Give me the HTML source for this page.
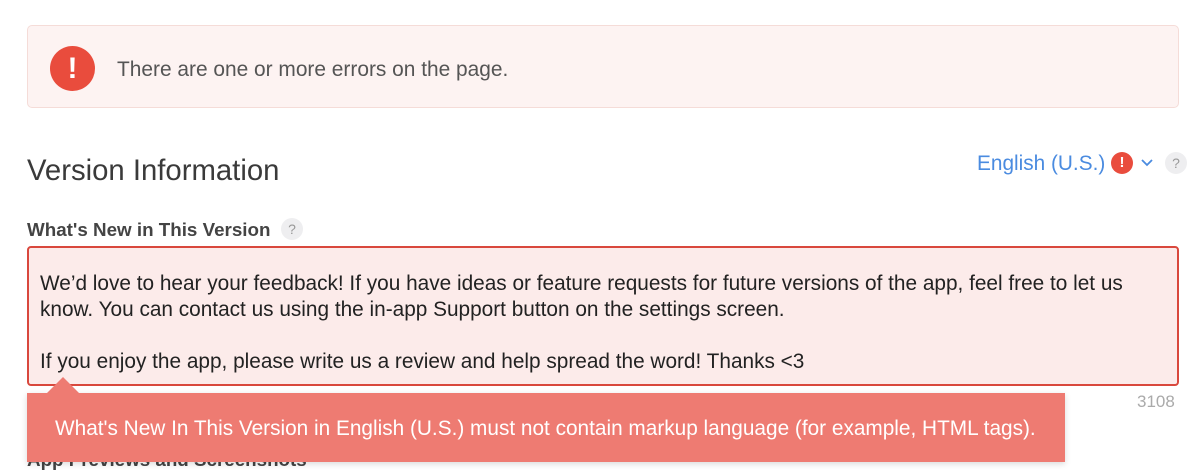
<!DOCTYPE html>
<html><head><style>
body{margin:0;width:1200px;height:474px;overflow:hidden;background:#fff;font-family:"Liberation Sans",sans-serif;position:relative}
.ab{position:absolute}
</style></head><body>
<div class="ab" style="left:27px;top:25px;width:1150px;height:81px;background:#fdf3f2;border:1px solid #f5dcd8;border-radius:5px"></div>
<div class="ab" style="left:50px;top:46px;width:45px;height:45px;border-radius:50%;background:#e94c3d;color:#fff;font:bold 30px/45px 'Liberation Sans';text-align:center">!</div>
<div class="ab" style="left:117px;top:58px;font-size:20.9px;color:#555">There are one or more errors on the page.</div>
<div class="ab" style="left:27px;top:154px;font-size:29.3px;color:#3a3a3a">Version Information</div>
<div class="ab" style="left:977px;top:152px;font-size:20.8px;color:#4a8be0">English (U.S.)</div>
<div class="ab" style="left:1111px;top:152px;width:22px;height:22px;border-radius:50%;background:#e94c3d;color:#fff;font:bold 15px/22px 'Liberation Sans';text-align:center">!</div>
<svg class="ab" style="left:1140px;top:158px" width="14" height="10"><path d="M2 2l5 5 5-5" stroke="#4a8be0" stroke-width="1.8" fill="none"/></svg>
<div class="ab" style="left:1165px;top:152px;width:22px;height:22px;border-radius:50%;background:#eeeef0;color:#999;font-size:14px;line-height:22px;text-align:center">?</div>
<div class="ab" style="left:27px;top:219px;font-size:18.8px;font-weight:bold;color:#444">What's New in This Version</div>
<div class="ab" style="left:281px;top:218px;width:22px;height:22px;border-radius:50%;background:#eeeef0;color:#999;font-size:14px;line-height:22px;text-align:center">?</div>
<div class="ab" style="left:27px;top:246px;width:1148px;height:136px;background:#fcebea;border:2px solid #d9483d;border-radius:4px"></div>
<div class="ab" style="left:40px;top:271px;width:1120px;font-size:20.8px;line-height:26px;color:#222">We’d love to hear your feedback! If you have ideas or feature requests for future versions of the app, feel free to let us know. You can contact us using the in-app Support button on the settings screen.<br><br>If you enjoy the app, please write us a review and help spread the word! Thanks &lt;3</div>
<div class="ab" style="left:1137px;top:392px;font-size:17px;color:#aaa">3108</div>
<div class="ab" style="left:27px;top:449px;font-size:18.8px;font-weight:bold;color:#444">App Previews and Screenshots</div>
<div class="ab" style="left:27px;top:393px;width:1038px;height:69px;background:#ee7b72;box-shadow:0 2px 6px rgba(0,0,0,.15)"></div>
<div class="ab" style="left:47px;top:377px;width:0;height:0;border-left:16px solid transparent;border-right:16px solid transparent;border-bottom:16px solid #ee7b72"></div>
<div class="ab" style="left:55px;top:417px;font-size:20.8px;color:#fff">What's New In This Version in English (U.S.) must not contain markup language (for example, HTML tags).</div>
</body></html>
